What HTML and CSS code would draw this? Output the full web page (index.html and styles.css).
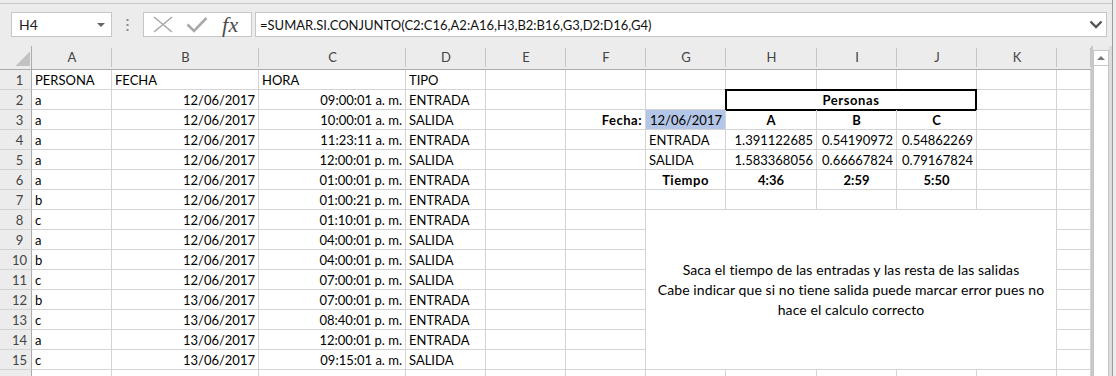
FILE: index.html
```html
<!DOCTYPE html>
<html lang="es">
<head>
<meta charset="utf-8">
<title>Excel - SUMAR.SI.CONJUNTO</title>
<link rel="stylesheet" href="styles.css">
</head>
<body>
<div class="app">
  <div class="ribbon-edge"></div>
  <div class="fbar">
    <div class="namebox"><span>H4</span><i class="dd"></i></div>
    <div class="grip">
      <svg width="3" height="12" viewBox="0 0 3 12"><rect x="0.5" y="0" width="2" height="2" fill="#8a8a8a"/><rect x="0.5" y="5" width="2" height="2" fill="#8a8a8a"/><rect x="0.5" y="10" width="2" height="2" fill="#8a8a8a"/></svg>
    </div>
    <div class="fbtns">
      <svg class="ico-x" width="20" height="17" viewBox="0 0 20 17"><path d="M1 1 L19 16 M19 1 L1 16" stroke="#a9a9a9" stroke-width="1.6" fill="none"/></svg>
      <svg class="ico-ok" width="22" height="17" viewBox="0 0 22 17"><path d="M1.5 8.5 L8 15 L20.5 2" stroke="#a9a9a9" stroke-width="2.6" fill="none"/></svg>
      <span class="fx">fx</span>
    </div>
    <div class="finput">
      <span>=SUMAR.SI.CONJUNTO(C2:C16,A2:A16,H3,B2:B16,G3,D2:D16,G4)</span>
      <svg width="14" height="9" viewBox="0 0 14 9"><path d="M1.5 1.5 L7 7 L12.5 1.5" stroke="#555" stroke-width="2.4" fill="none"/></svg>
    </div>
  </div>

  <div class="main">
    <div class="sheet">
      <!-- header -->
      <div class="ch corner"></div>
      <div class="ch">A</div><div class="ch">B</div><div class="ch">C</div><div class="ch">D</div>
      <div class="ch">E</div><div class="ch">F</div><div class="ch">G</div><div class="ch">H</div>
      <div class="ch">I</div><div class="ch">J</div><div class="ch">K</div><div class="ch"></div>

      <!-- row 1 -->
      <div class="rh">1</div>
      <div class="c">PERSONA</div><div class="c">FECHA</div><div class="c">HORA</div><div class="c">TIPO</div>
      <div class="c"></div><div class="c"></div><div class="c"></div><div class="c"></div>
      <div class="c"></div><div class="c"></div><div class="c"></div><div class="c"></div>

      <!-- row 2 -->
      <div class="rh">2</div>
      <div class="c">a</div><div class="c r">12/06/2017</div><div class="c r">09:00:01 a. m.</div><div class="c">ENTRADA</div>
      <div class="c"></div><div class="c"></div><div class="c"></div>
      <div class="c per">Personas</div>
      <div class="c"></div><div class="c"></div>

      <!-- row 3 -->
      <div class="rh">3</div>
      <div class="c">a</div><div class="c r">12/06/2017</div><div class="c r">10:00:01 a. m.</div><div class="c">SALIDA</div>
      <div class="c"></div><div class="c r b wide">Fecha:</div><div class="c r sel">12/06/2017</div>
      <div class="c ctr b">A</div><div class="c ctr b">B</div><div class="c ctr b">C</div>
      <div class="c"></div><div class="c"></div>

      <!-- row 4 -->
      <div class="rh">4</div>
      <div class="c">a</div><div class="c r">12/06/2017</div><div class="c r">11:23:11 a. m.</div><div class="c">ENTRADA</div>
      <div class="c"></div><div class="c"></div><div class="c">ENTRADA</div>
      <div class="c r">1.391122685</div><div class="c r">0.54190972</div><div class="c r">0.54862269</div>
      <div class="c"></div><div class="c"></div>

      <!-- row 5 -->
      <div class="rh">5</div>
      <div class="c">a</div><div class="c r">12/06/2017</div><div class="c r">12:00:01 p. m.</div><div class="c">SALIDA</div>
      <div class="c"></div><div class="c"></div><div class="c">SALIDA</div>
      <div class="c r">1.583368056</div><div class="c r">0.66667824</div><div class="c r">0.79167824</div>
      <div class="c"></div><div class="c"></div>

      <!-- row 6 -->
      <div class="rh">6</div>
      <div class="c">a</div><div class="c r">12/06/2017</div><div class="c r">01:00:01 p. m.</div><div class="c">ENTRADA</div>
      <div class="c"></div><div class="c"></div><div class="c ctr b wide">Tiempo</div>
      <div class="c ctr b">4:36</div><div class="c ctr b">2:59</div><div class="c ctr b">5:50</div>
      <div class="c"></div><div class="c"></div>

      <!-- row 7 -->
      <div class="rh">7</div>
      <div class="c">b</div><div class="c r">12/06/2017</div><div class="c r">01:00:21 p. m.</div><div class="c">ENTRADA</div>
      <div class="c"></div><div class="c"></div><div class="c"></div><div class="c"></div>
      <div class="c"></div><div class="c"></div><div class="c"></div><div class="c"></div>

      <!-- row 8 -->
      <div class="rh">8</div>
      <div class="c">c</div><div class="c r">12/06/2017</div><div class="c r">01:10:01 p. m.</div><div class="c">ENTRADA</div>
      <div class="c"></div><div class="c"></div>
      <div class="c note">
        <span>Saca el tiempo de las entradas y las resta de las salidas</span>
        <span>Cabe indicar que si no tiene salida puede marcar error pues no</span>
        <span>hace el calculo correcto</span>
      </div>
      <div class="c"></div>

      <!-- row 9 -->
      <div class="rh">9</div>
      <div class="c">a</div><div class="c r">12/06/2017</div><div class="c r">04:00:01 p. m.</div><div class="c">SALIDA</div>
      <div class="c"></div><div class="c"></div><div class="c"></div>

      <!-- row 10 -->
      <div class="rh">10</div>
      <div class="c">b</div><div class="c r">12/06/2017</div><div class="c r">04:00:01 p. m.</div><div class="c">SALIDA</div>
      <div class="c"></div><div class="c"></div><div class="c"></div>

      <!-- row 11 -->
      <div class="rh">11</div>
      <div class="c">c</div><div class="c r">12/06/2017</div><div class="c r">07:00:01 p. m.</div><div class="c">SALIDA</div>
      <div class="c"></div><div class="c"></div><div class="c"></div>

      <!-- row 12 -->
      <div class="rh">12</div>
      <div class="c">b</div><div class="c r">13/06/2017</div><div class="c r">07:00:01 p. m.</div><div class="c">ENTRADA</div>
      <div class="c"></div><div class="c"></div><div class="c"></div>

      <!-- row 13 -->
      <div class="rh">13</div>
      <div class="c">c</div><div class="c r">13/06/2017</div><div class="c r">08:40:01 p. m.</div><div class="c">ENTRADA</div>
      <div class="c"></div><div class="c"></div><div class="c"></div>

      <!-- row 14 -->
      <div class="rh">14</div>
      <div class="c">a</div><div class="c r">13/06/2017</div><div class="c r">12:00:01 p. m.</div><div class="c">ENTRADA</div>
      <div class="c"></div><div class="c"></div><div class="c"></div>

      <!-- row 15 -->
      <div class="rh">15</div>
      <div class="c">c</div><div class="c r">13/06/2017</div><div class="c r">09:15:01 a. m.</div><div class="c">SALIDA</div>
      <div class="c"></div><div class="c"></div><div class="c"></div>

      <!-- row 16 (only top edge visible) -->
      <div class="rh"></div>
      <div class="c"></div><div class="c r low">13/06/2017</div><div class="c"></div><div class="c"></div>
      <div class="c"></div><div class="c"></div><div class="c"></div><div class="c"></div>
      <div class="c"></div><div class="c"></div><div class="c"></div><div class="c"></div>
    </div>

    <div class="vscroll">
      <div class="sb">
        <div class="sb-up"><i class="up"></i></div>
        <div class="sb-track"></div>
      </div>
    </div>
  </div>
</div>
</body>
</html>
```

FILE: styles.css
```css
* { box-sizing: border-box; }

html, body {
  margin: 0;
  padding: 0;
  background: #ececec;
}

body {
  width: 1116px;
  height: 376px;
  overflow: hidden;
  font-family: "Lato", "Open Sans", sans-serif;
  color: #000;
}

.app {
  width: 1113px;
  height: 376px;
  border-right: 1px solid #9d9d9d;
  background: #ececec;
  overflow: hidden;
}

.ribbon-edge {
  height: 4px;
  border-bottom: 1px solid #c9c9c9;
}

/* formula bar */
.fbar {
  display: flex;
  margin-top: 8px;
  height: 25px;
  padding-left: 11px;
}

.namebox {
  width: 101px;
  border: 1px solid #c6c6c6;
  background: #fff;
  display: flex;
  align-items: center;
  justify-content: space-between;
  padding: 0 6px 0 7px;
  font-size: 14px;
  color: #222;
}

.dd {
  width: 0;
  height: 0;
  border-left: 4px solid transparent;
  border-right: 4px solid transparent;
  border-top: 4px solid #666;
}

.grip {
  width: 31px;
  display: flex;
  align-items: center;
  justify-content: center;
}

.fbtns {
  width: 109px;
  border: 1px solid #c6c6c6;
  background: #fff;
  display: flex;
  align-items: center;
  padding-left: 9px;
}

.ico-ok { margin-left: 13px; }

.fx {
  margin-left: 14px;
  font-family: "Liberation Serif", "DejaVu Serif", serif;
  font-style: italic;
  font-size: 22px;
  line-height: 22px;
  color: #4a4a4a;
  letter-spacing: 0.5px;
}

.finput {
  width: 852px;
  margin-left: 3px;
  border: 1px solid #c6c6c6;
  background: #fff;
  display: flex;
  align-items: center;
  justify-content: space-between;
  padding: 0 3px 0 4px;
  font-size: 13px;
  color: #111;
}

/* sheet */
.main {
  display: flex;
  margin-top: 9px;
}

.sheet {
  display: grid;
  grid-template-columns: 32px 80px 147px 147px 80px 80px 80px 80px 91px 80px 80px 80px 34px;
  grid-auto-rows: 20px;
  grid-template-rows: 24px;
  width: 1091px;
  font-size: 13px;
  background: #fff;
}

.ch {
  background: #ececec linear-gradient(#c4c4c4, #c4c4c4) right 2px / 1px 19px no-repeat;
  border-bottom: 1px solid #ababab;
  text-align: center;
  line-height: 23px;
  color: #444;
  font-size: 13px;
}

.ch.corner {
  background:
    linear-gradient(to bottom right, transparent 50%, #c2c2c2 50%) right 1px bottom 3px / 14px 14px no-repeat,
    #ececec;
  border-right: 1px solid #ababab;
}

.rh {
  background: #ececec;
  border-right: 1px solid #ababab;
  border-bottom: 1px solid #d4d4d4;
  text-align: center;
  padding: 1px 0 0 8px;
  line-height: 19px;
  color: #444;
}

.c {
  border-right: 1px solid #d4d4d4;
  border-bottom: 1px solid #d4d4d4;
  padding: 1px 3px 0;
  line-height: 19px;
  white-space: nowrap;
  overflow: hidden;
}

.r { text-align: right; }
.ctr { text-align: center; }
.b { font-weight: 700; }
.wide { letter-spacing: 0.5px; }
.low { padding-top: 4px; }

.sel { background: #b4c6e7; }

.per {
  grid-column: span 3;
  text-align: center;
  font-weight: 700;
  letter-spacing: 0.6px;
  border: 2px solid #000;
  margin: -1px 0 -1px -1px;
  line-height: 18px;
  padding-top: 0;
}

.note {
  grid-column: span 5;
  grid-row: span 8;
  display: flex;
  flex-direction: column;
  justify-content: center;
  align-items: center;
  line-height: 20px;
  font-size: 14px;
  letter-spacing: 0.1px;
  padding: 0;
  white-space: nowrap;
}

/* vertical scrollbar */
.vscroll {
  width: 21px;
  height: 330px;
  border-left: 2px solid #c8c8c8;
  border-right: 3px solid #dcdcdc;
  padding-top: 4px;
  background: #ececec;
}

.sb {
  width: 16px;
  height: 100%;
  display: flex;
  flex-direction: column;
}

.sb-up {
  height: 16px;
  background: #fff;
  border: 1px solid #c6c6c6;
  display: flex;
  align-items: center;
  justify-content: center;
}

.up {
  width: 0;
  height: 0;
  border-left: 4px solid transparent;
  border-right: 4px solid transparent;
  border-bottom: 4px solid #777;
}

.sb-track {
  flex: 1;
  background: #fff;
  border-left: 1px solid #c6c6c6;
  border-right: 1px solid #c6c6c6;
}
```
